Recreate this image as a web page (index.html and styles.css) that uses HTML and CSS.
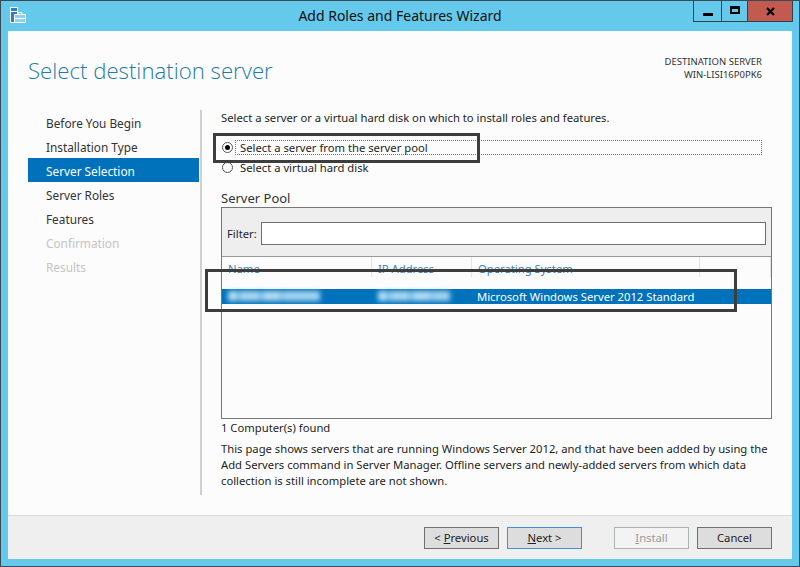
FILE: index.html
```html
<!DOCTYPE html>
<html lang="en">
<head>
<meta charset="utf-8">
<title>Add Roles and Features Wizard</title>
<link rel="stylesheet" href="styles.css">
</head>
<body>
<div class="window">
  <div class="titlebar">
    <svg class="appicon" width="17" height="17" viewBox="0 0 17 17">
      <path d="M.5.5h7v15h-7z" fill="#2f7fc0" stroke="#fff"/>
      <path d="M.5 4.5h7" stroke="#fff"/>
      <path d="M4.5 7.5h11v8h-11z" fill="#8fd0ea" stroke="#fff"/>
      <path d="M8 7.5v-2h4v2M4.5 11.5h11M10 10.5v2" fill="none" stroke="#fff"/>
    </svg>
    <div class="wintitle">Add Roles and Features Wizard</div>
    <div class="caption">
      <div class="capbtn min"><span class="minglyph"></span></div>
      <div class="capbtn max"><span class="maxglyph"></span></div>
      <div class="capbtn close"><svg width="9" height="9" viewBox="0 0 9 9"><path d="M1 1l7 7M8 1l-7 7" stroke="#000" stroke-width="2.2"/></svg></div>
    </div>
  </div>
  <div class="client">
    <div class="content">
      <header class="head">
        <h1>Select destination server</h1>
        <div class="dest">DESTINATION SERVER<br>WIN-LISI16P0PK6</div>
      </header>
      <div class="body">
        <nav class="nav">
          <div class="step">Before You Begin</div>
          <div class="step">Installation Type</div>
          <div class="step active">Server Selection</div>
          <div class="step">Server Roles</div>
          <div class="step">Features</div>
          <div class="step off">Confirmation</div>
          <div class="step off">Results</div>
        </nav>
        <main class="main">
          <p class="intro">Select a server or a virtual hard disk on which to install roles and features.</p>
          <div class="radio first"><span class="dot on"></span><span class="rlabel focus">Select a server from the server pool</span></div>
          <div class="radio second"><span class="dot"></span><span class="rlabel">Select a virtual hard disk</span></div>
          <h2>Server Pool</h2>
          <div class="pool">
            <div class="filter"><label>Filter:</label><div class="input"></div></div>
            <div class="cols">
              <div class="col c1">Name</div>
              <div class="col c2">IP Address</div>
              <div class="col c3">Operating System</div>
              <div class="col c4"></div>
            </div>
            <div class="row">
              <div class="cell c1"><span class="smear s1"></span></div>
              <div class="cell c2"><span class="smear s2"></span></div>
              <div class="cell c3">Microsoft Windows Server 2012 Standard</div>
            </div>
          </div>
          <p class="found">1 Computer(s) found</p>
          <p class="note">This page shows servers that are running Windows Server 2012, and that have been added by using the Add Servers command in Server Manager. Offline servers and newly-added servers from which data collection is still incomplete are not shown.</p>
        </main>
      </div>
    </div>
    <footer class="foot">
      <button class="btn b-prev">&lt; <u>P</u>revious</button>
      <button class="btn b-next"><u>N</u>ext &gt;</button>
      <button class="btn b-inst" disabled><u>I</u>nstall</button>
      <button class="btn b-cancel">Cancel</button>
    </footer>
  </div>
</div>
<div class="mark m1"></div>
<div class="mark m2"></div>
</body>
</html>
```
FILE: styles.css
```css
* { box-sizing: border-box; }
html, body { margin: 0; padding: 0; }
body {
  width: 800px; height: 567px; position: relative; overflow: hidden;
  font-family: "Noto Sans", "Open Sans", sans-serif; font-size: 11.25px; color: #1e1e1e;
}
.window {
  width: 800px; height: 567px; background: #65c9eb;
  border: 1px solid #3a4a55; display: flex; flex-direction: column;
}
.titlebar { height: 30px; display: flex; position: relative; flex: none; }
.appicon { margin: 6px 0 0 9px; }
.wintitle {
  position: absolute; left: 0; right: 0; top: 5px; text-align: center;
  font-size: 14px; line-height: 20px; color: #111;
}
.caption {
  position: absolute; top: 0; right: 6px; display: flex; height: 21px;
  border: 1px solid #2f4250; border-top: 0;
}
.capbtn { display: flex; align-items: center; justify-content: center; height: 20px; }
.min { width: 28px; border-right: 1px solid #2f4250; }
.max { width: 26px; border-right: 1px solid #2f4250; }
.close { width: 44px; background: #c25a50; }
.minglyph { width: 10px; height: 3px; background: #000; margin-top: 6px; }
.maxglyph { width: 10px; height: 8px; border: 2px solid #000; border-top-width: 3px; margin-top: -2px; }
.client { flex: 1; margin: 0 7px 7px; display: flex; flex-direction: column; background: #fcfcfc; }
.content { flex: 1; padding: 0 0 0 20px; display: flex; flex-direction: column; min-height: 0; }
.head { height: 79px; position: relative; flex: none; }
h1 {
  margin: 0; padding-top: 24px; font-size: 22.2px; line-height: 32px; font-weight: 300;
  color: #1f7ba8; font-family: "Open Sans", "Noto Sans", sans-serif;
}
.dest {
  position: absolute; right: 30px; top: 24px; text-align: right;
  font-size: 9.5px; line-height: 13px; color: #333;
}
.body { display: flex; flex: 1; min-height: 0; }
.nav { width: 174px; flex: none; border-right: 2px solid #d0d0d0; margin-bottom: 20px; }
.step { height: 24px; line-height: 26px; padding-left: 18px; width: 171px; color: #333; font-size: 11.8px; }
.step.active { background: #0072bc; color: #fff; }
.step.off { color: #c4c4c4; }
.main { flex: 1; padding: 0 20px 0 19px; min-width: 0; }
.intro { margin: 0; line-height: 16px; height: 30px; }
.radio { display: flex; align-items: center; height: 15px; }
.second { margin-top: 5px; }
.rlabel { flex: 1; height: 15px; line-height: 13px; border: 1px dotted transparent; padding-left: 4px; margin-right: 10px; }
.focus { border-color: #777; }
.dot {
  width: 11px; height: 11px; border-radius: 50%; border: 1px solid #555; background: #fff;
  margin: 0 2px 0 1px; flex: none; position: relative;
}
.dot.on::after {
  content: ""; position: absolute; left: 2px; top: 2px; width: 5px; height: 5px;
  border-radius: 50%; background: #000;
}
h2 { margin: 0; padding-top: 13px; font-size: 13px; line-height: 20px; font-weight: 400; color: #333; height: 32px; }
.pool { height: 212px; border: 1px solid #777; }
.filter { height: 49px; background: #eee; border-bottom: 1px solid #999; display: flex; align-items: center; padding: 3px 5px 0 5px; gap: 4px; }
.input { flex: 1; height: 23px; background: #fff; border: 1px solid #6d6d6d; }
.cols { display: flex; height: 20px; }
.col { padding-left: 6px; line-height: 24px; color: #3a7cc4; border-right: 1px solid #e4e4e4; height: 20px; overflow: hidden; }
.c1 { width: 150px; }
.c2 { width: 100px; }
.c3 { width: 228px; }
.c4 { flex: 1; }
.row { display: flex; height: 15px; margin-top: 12px; background: #0072bc; color: #fff; line-height: 15px; }
.cell { padding-left: 6px; white-space: nowrap; }
.cell.c3 { padding-left: 5px; }
.smear {
  display: block; height: 10px; margin-top: 2px;
  background: linear-gradient(90deg, #b4ddf3 0 9px, #6fb5e2 9px 12px, #a8d6f0 12px 31px, #7dbce5 31px 35px, #b0daf2 35px 52px, #8cc5e9 52px 56px, #a2d3ef 56px 100%);
  filter: blur(2.5px);
}
.s1 { width: 92px; }
.s2 { width: 72px; }
.found { margin: 0; line-height: 18px; height: 22px; }
.note { margin: 0; line-height: 16px; }
.foot {
  flex: none; height: 44px; background: #efefef; border-top: 1px solid #d8d8d8;
  display: flex; align-items: flex-start; padding: 11px 0 0 416px;
}
.btn {
  width: 75px; height: 22px; padding: 0; background: #dddddd; border: 1px solid #707070;
  font: inherit; color: #222; line-height: 18px;
}
.b-next { margin-left: 8px; border-color: #3b93e0; }
.b-inst { margin-left: 32px; background: #f3f3f3; border-color: #adb2b5; color: #9a9a9a; }
.b-cancel { margin-left: 8px; }
.mark { position: absolute; border: 3px solid #3d3d3d; }
.m1 { left: 213px; top: 133px; width: 267px; height: 30px; }
.m2 { left: 205px; top: 269px; width: 532px; height: 43px; }
```
